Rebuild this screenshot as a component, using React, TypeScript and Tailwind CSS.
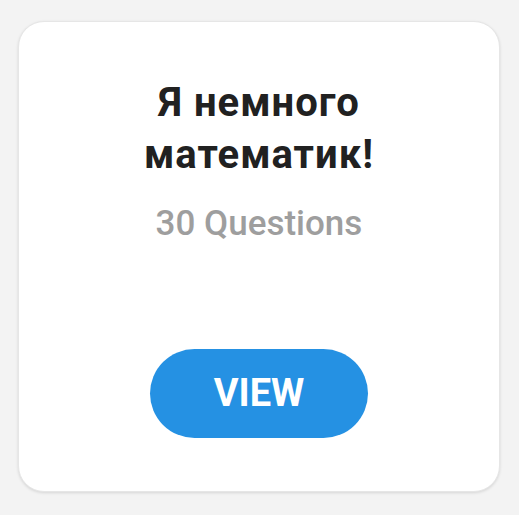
import React from "react";

export default function App() {
  return (
    <div className="w-[519px] h-[515px] bg-[#f3f3f3] pt-[21px] pl-[18px] font-['Roboto',sans-serif]">
      {/* quiz card */}
      <div className="w-[482px] h-[471px] bg-white rounded-[26px] border border-[#e6e6e6] shadow-[0_1px_3px_rgba(0,0,0,0.12)] flex flex-col items-center pt-[55px] pb-[53px]">
        <h2 className="text-[40px] leading-[52px] tracking-[1px] font-bold text-[#212121] text-center w-[330px]">
          Я немного математик!
        </h2>
        <p className="mt-[22px] text-[35px] leading-[42px] font-medium text-[#9e9e9e]">
          30 Questions
        </p>
        <button className="mt-auto w-[218px] h-[89px] rounded-full bg-[#2591e3] text-white text-[38px] font-bold">
          VIEW
        </button>
      </div>
    </div>
  );
}
